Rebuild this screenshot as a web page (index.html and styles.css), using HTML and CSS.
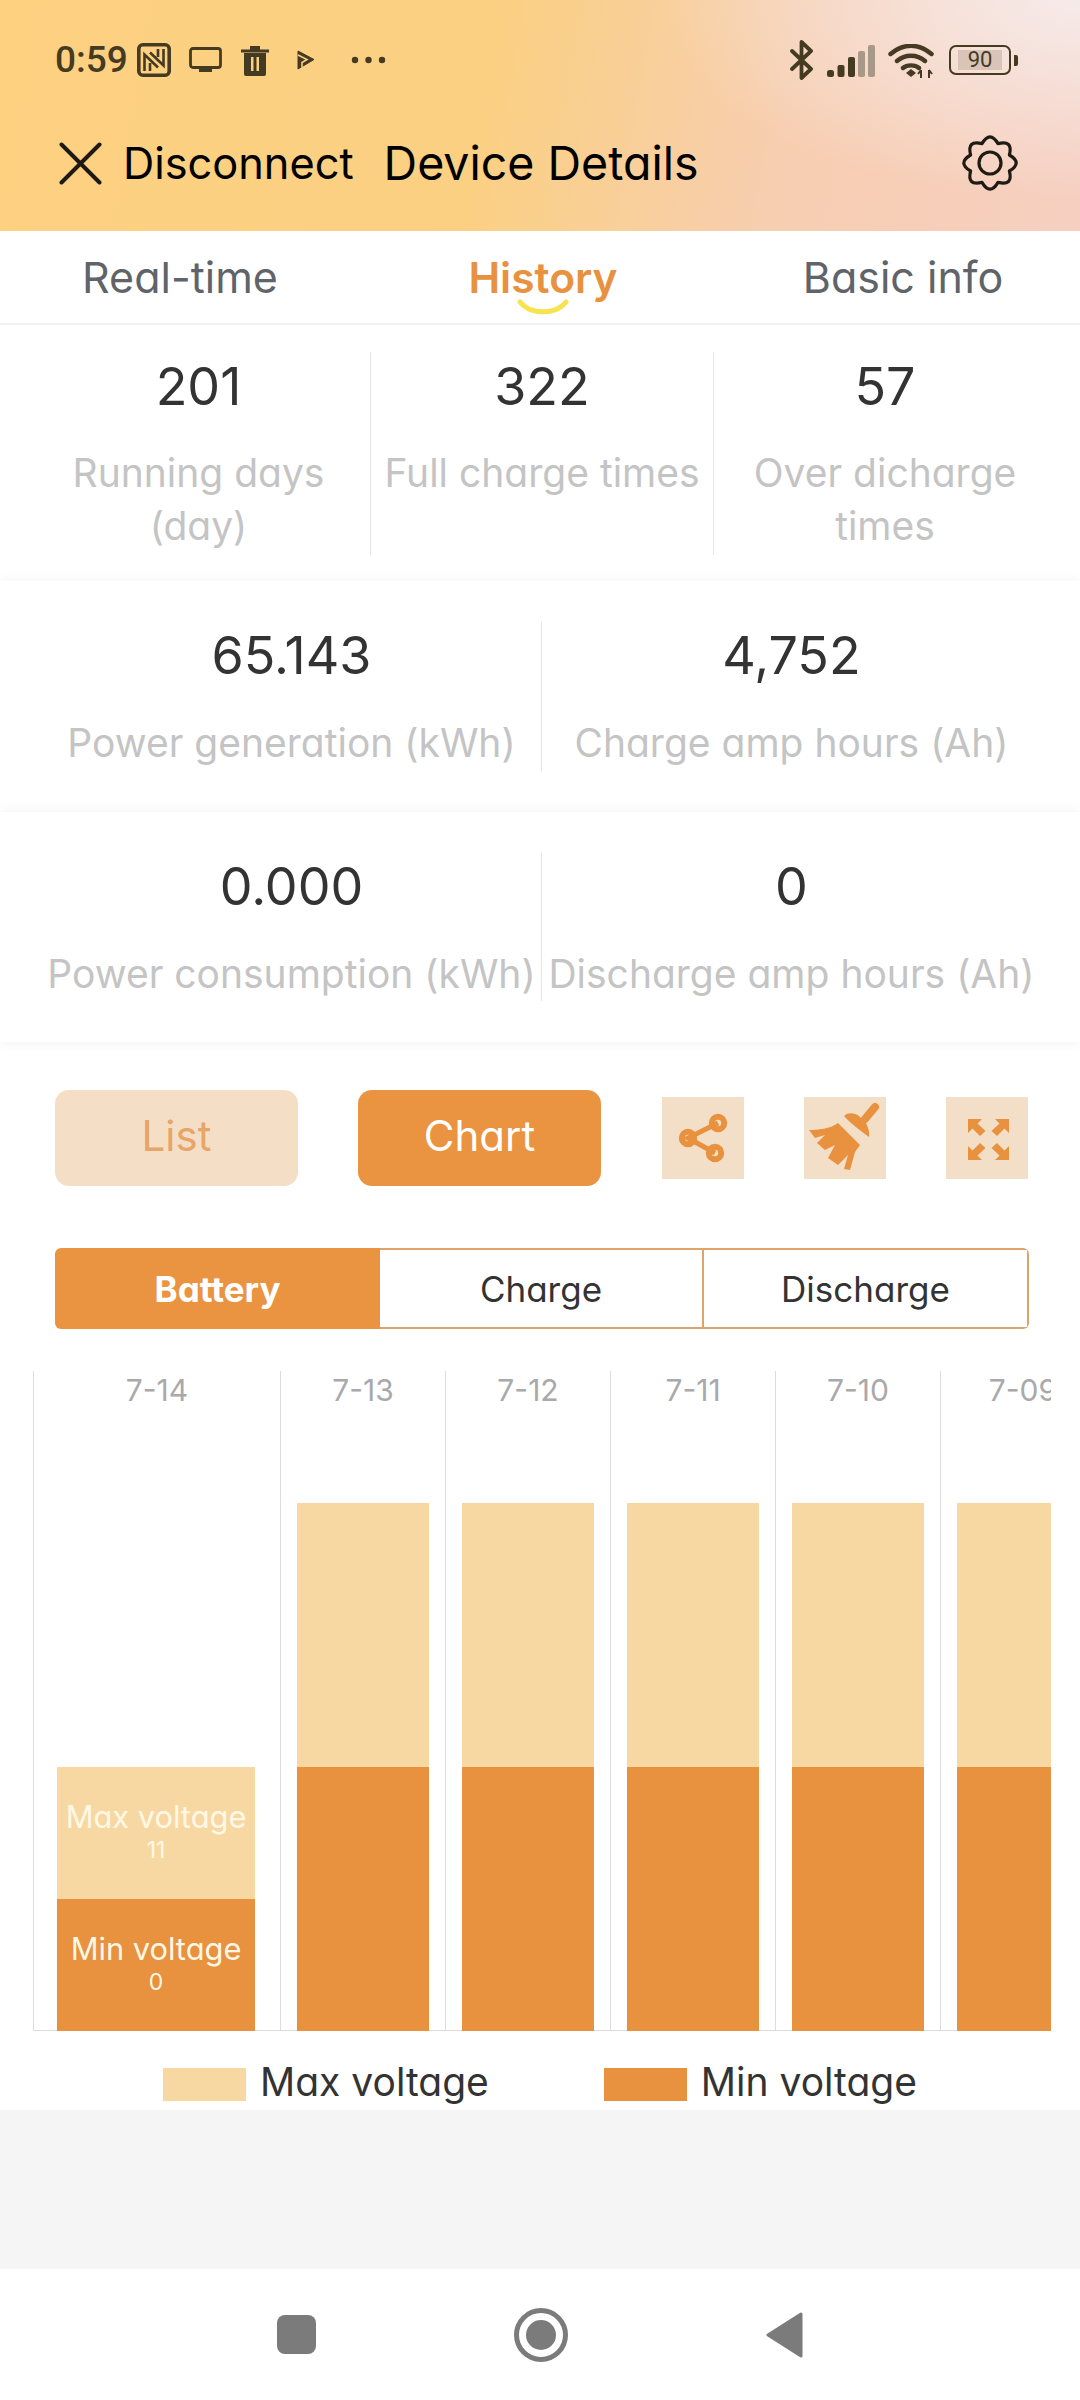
FILE: index.html
```html
<html lang="en">
<head>
    <meta charset="UTF-8">
    <meta name="viewport" content="width=device-width, initial-scale=1.0">
    <title>Device Details</title>
    <link rel="stylesheet" href="styles.css">
</head>
<body>
    <div class="app-header">
        <div class="status-bar">
            <span class="status-time">0:59</span>
            <svg class="icon-nfc" viewBox="0 0 34 34"><rect x="1.800" y="1.800" width="30.400" height="30.400" rx="4" fill="none" stroke="#453a22" stroke-width="3.600"/><path d="M7.500 28V11.500L21 24.500M13 28V20M26.500 6V22.500L13 9.500M21 6V14" fill="none" stroke="#453a22" stroke-width="2.600"/></svg>
            <svg class="icon-screen" viewBox="0 0 33 26"><rect x="1.500" y="1.500" width="30" height="19" rx="2.500" fill="none" stroke="#453a22" stroke-width="2.800"/><rect x="10" y="20" width="13" height="5" fill="#453a22"/></svg>
            <svg class="icon-trash" viewBox="0 0 28 31"><path d="M0 4.500h28v3H0zM9 1h10v4H9z" fill="#453a22"/><path d="M3 8h22v21a2 2 0 0 1-2 2H5a2 2 0 0 1-2-2z" fill="#453a22"/><path d="M10 12h2.500v14H10zM15.500 12H18v14h-2.500z" fill="#fbd083"/></svg>
            <svg class="icon-play" viewBox="0 0 18 20"><path d="M1 1l16 8.500L1 19z" fill="#453a22" stroke="#453a22" stroke-linejoin="round"/><path d="M1 5l9 4.500-5 3v5" fill="none" stroke="#fbd083" stroke-width="1.600"/></svg>
            <svg class="icon-dots" viewBox="0 0 35 8"><circle cx="4" cy="4" r="3.200" fill="#453a22"/><circle cx="17.500" cy="4" r="3.200" fill="#453a22"/><circle cx="31" cy="4" r="3.200" fill="#453a22"/></svg>
            <svg class="icon-bt" viewBox="0 0 25 40"><path d="M3 11l19 18-9.500 9V2L22 11 3 29" fill="none" stroke="#453a22" stroke-width="3.800" stroke-linejoin="round" stroke-linecap="round"/></svg>
            <svg class="icon-signal" viewBox="0 0 48 32"><rect x="0" y="25" width="7" height="7" rx="2.500" fill="#453a22"/><rect x="10.500" y="20" width="7" height="12" rx="2" fill="#453a22"/><rect x="21" y="12" width="7" height="20" rx="2" fill="#453a22"/><rect x="31" y="6" width="7" height="26" rx="2" fill="#a8988a"/><rect x="41" y="0" width="7" height="32" rx="2" fill="#a8988a"/></svg>
            <svg class="icon-wifi" viewBox="0 0 46 34"><path d="M2.500 10c13-11 28-11 41 0M9 17c8-7 20-7 28 0M15 24c4-3.500 12-3.500 16 0" fill="none" stroke="#453a22" stroke-width="4.400" stroke-linecap="round"/><path d="M18 29l5-4 5 4-5 4z" fill="#453a22"/><path d="M33 26v8M30 30l3-4M41 26v8M41 26l3 4" fill="none" stroke="#453a22" stroke-width="2"/></svg>
            <div class="status-battery">
                <div class="battery-body"><span class="battery-level">90</span></div>
                <div class="battery-tip"></div>
            </div>
        </div>
        <div class="title-bar">
            <svg class="icon-close" viewBox="0 0 43 43"><path d="M2.500 2.500l38 38M40.500 2.500l-38 38" fill="none" stroke="#1c1a12" stroke-width="4" stroke-linecap="round"/></svg>
            <span class="disconnect">Disconnect</span>
            <span class="page-title">Device Details</span>
            <svg class="icon-gear" viewBox="-1 -1 56 56"><path d="M46.400 19Q60 27 46.400 35Q50.300 50.300 35 46.400Q27 60 19 46.400Q3.700 50.300 7.600 35Q-6 27 7.600 19Q3.700 3.700 19 7.600Q27 -6 35 7.600Q50.300 3.700 46.400 19z" fill="none" stroke="#1f1a14" stroke-width="3.200" stroke-linejoin="round"/><circle cx="27" cy="27" r="11" fill="none" stroke="#1f1a14" stroke-width="3.200"/></svg>
        </div>
    </div>

    <div class="tabs">
        <div class="tab">Real-time</div>
        <div class="tab active">History
            <svg class="tab-smile" viewBox="0 0 52 16"><path d="M3 3c10 13 36 13 46 0" fill="none" stroke="#f7e24f" stroke-width="5" stroke-linecap="round"/></svg>
        </div>
        <div class="tab">Basic info</div>
    </div>

    <div class="stat-row three">
        <div class="stat-cell"><div class="stat-value">201</div><div class="stat-label">Running days (day)</div></div>
        <div class="stat-cell"><div class="stat-value">322</div><div class="stat-label">Full charge times</div></div>
        <div class="stat-cell"><div class="stat-value">57</div><div class="stat-label">Over dicharge times</div></div>
    </div>
    <div class="stat-row two">
        <div class="stat-cell"><div class="stat-value">65.143</div><div class="stat-label">Power generation (kWh)</div></div>
        <div class="stat-cell"><div class="stat-value">4,752</div><div class="stat-label">Charge amp hours (Ah)</div></div>
    </div>
    <div class="stat-row two last">
        <div class="stat-cell"><div class="stat-value">0.000</div><div class="stat-label">Power consumption (kWh)</div></div>
        <div class="stat-cell"><div class="stat-value">0</div><div class="stat-label">Discharge amp hours (Ah)</div></div>
    </div>

    <div class="toolbar">
        <div class="view-btn">List</div>
        <div class="view-btn active">Chart</div>
        <div class="tool-btn">
            <svg viewBox="0 0 82 82"><path d="M56 26L26 41L53 56" fill="none" stroke="#e8913f" stroke-width="5"/><g fill="none" stroke="#e8913f" stroke-width="6"><circle cx="56" cy="26" r="6.200"/><circle cx="26" cy="41" r="6.200"/><circle cx="53" cy="56" r="6.200"/></g></svg>
        </div>
        <div class="tool-btn">
            <svg viewBox="0 0 82 82"><path d="M71 10L61 22" fill="none" stroke="#e8913f" stroke-width="8" stroke-linecap="round"/><path d="M40 19C44 15 51 16 55 19L62 26C64 31 66 35 65 40C57 34 47 27 40 19z" fill="#e8913f"/><path d="M34 26L56 48L51 55L46 73L40 72L44 58L34 68L24 61L31 48L21 53L13 46L21 38L11 41L5 33C14 33 26 32 34 26z" fill="#e8913f"/></svg>
        </div>
        <div class="tool-btn">
            <svg viewBox="0 0 82 82"><g fill="#e8913f"><path d="M22 22h14l-4.500 4.500 8 7.500-5.500 5-7.500-7.500L22 36z"/><path d="M63 22H49l4.500 4.500-8 7.500 5.500 5 7.500-7.500L63 36z"/><path d="M22 63h14l-4.500-4.500 8-7.500-5.500-5-7.500 7.500L22 49z"/><path d="M63 63H49l4.500-4.500-8-7.500 5.500-5 7.500 7.500L63 49z"/></g></svg>
        </div>
    </div>

    <div class="segments">
        <div class="segment active">Battery</div>
        <div class="segment">Charge</div>
        <div class="segment">Discharge</div>
    </div>

    <div class="chart">
        <div class="chart-col first">
            <div class="chart-date">7-14</div>
            <div class="bar-stack">
                <div class="bar max"><span class="bar-name">Max voltage</span><span class="bar-value">11</span></div>
                <div class="bar min"><span class="bar-name">Min voltage</span><span class="bar-value">0</span></div>
            </div>
        </div>
        <div class="chart-col">
            <div class="chart-date">7-13</div>
            <div class="bar-stack"><div class="bar max"></div><div class="bar min"></div></div>
        </div>
        <div class="chart-col">
            <div class="chart-date">7-12</div>
            <div class="bar-stack"><div class="bar max"></div><div class="bar min"></div></div>
        </div>
        <div class="chart-col">
            <div class="chart-date">7-11</div>
            <div class="bar-stack"><div class="bar max"></div><div class="bar min"></div></div>
        </div>
        <div class="chart-col">
            <div class="chart-date">7-10</div>
            <div class="bar-stack"><div class="bar max"></div><div class="bar min"></div></div>
        </div>
        <div class="chart-col">
            <div class="chart-date">7-09</div>
            <div class="bar-stack"><div class="bar max"></div><div class="bar min"></div></div>
        </div>
    </div>

    <div class="legend">
        <div class="legend-item"><span class="swatch max"></span>Max voltage</div>
        <div class="legend-item"><span class="swatch min"></span>Min voltage</div>
    </div>

    <div class="gray-fill"></div>

    <div class="nav-bar">
        <div class="nav-square"></div>
        <div class="nav-circle"><div class="nav-dot"></div></div>
        <svg class="nav-back" viewBox="0 0 37 46"><path d="M35 2L2 23l33 21z" fill="#7b7b7b" stroke="#7b7b7b" stroke-width="3" stroke-linejoin="round"/></svg>
    </div>
</body>
</html>
```

FILE: styles.css
```css
body {
    margin: 0;
    width: 1080px;
    height: 2400px;
    background: #fff;
    display: flex;
    flex-direction: column;
    overflow: hidden;
    font-family: 'Inter', 'Noto Sans', sans-serif;
    font-feature-settings: "cv11";
    color: #333;
}
svg {
    display: block;
    flex-shrink: 0;
}

/* header */
.app-header {
    height: 231px;
    background:
        radial-gradient(ellipse 420px 200px at 100% 0%, rgba(246, 236, 236, 0.95), rgba(246, 236, 236, 0)),
        linear-gradient(100deg, #fdd180 0%, #fbd083 45%, #f7ceb0 72%, #f6cfc1 100%);
}
.status-bar {
    height: 135px;
    box-sizing: border-box;
    padding: 40px 62px 0 55px;
    display: flex;
    align-items: flex-start;
    color: #453a22;
}
.status-time {
    font-family: 'Roboto', sans-serif;
    font-size: 37px;
    font-weight: 500;
    line-height: 40px;
    width: 82px;
}
.icon-nfc { width: 34px; height: 34px; margin-top: 3px; }
.icon-screen { width: 33px; height: 26px; margin: 7px 0 0 18px; }
.icon-trash { width: 28px; height: 31px; margin: 5px 0 0 19px; }
.icon-play { width: 18px; height: 20px; margin: 10px 0 0 28px; }
.icon-dots { width: 35px; height: 8px; margin: 16px 0 0 36px; }
.icon-bt { width: 25px; height: 40px; margin-left: auto; }
.icon-signal { width: 48px; height: 32px; margin: 5px 0 0 13px; }
.icon-wifi { width: 46px; height: 34px; margin: 4px 0 0 13px; }
.status-battery {
    display: flex;
    align-items: center;
    margin: 5px 0 0 15px;
}
.battery-body {
    width: 62px;
    height: 30px;
    box-sizing: border-box;
    border: 2.5px solid #453a22;
    border-radius: 7px;
    padding: 3px 7px;
    display: flex;
}
.battery-level {
    flex: 1;
    background: #d9c5b8;
    font-family: 'Roboto', sans-serif;
    font-size: 22px;
    line-height: 19px;
    text-align: center;
    color: #453a22;
}
.battery-tip {
    width: 4px;
    height: 11px;
    margin-left: 3px;
    background: #453a22;
    border-radius: 0 2px 2px 0;
}
.title-bar {
    height: 56px;
    padding: 0 62px 0 59px;
    display: flex;
    align-items: center;
    color: #000;
    font-size: 46.5px;
}
.icon-close { width: 43px; height: 43px; margin-right: 21px; }
.disconnect { font-size: 43.3px; margin-right: 30px; }
.icon-gear { width: 56px; height: 56px; margin-left: auto; }

/* tabs */
.tabs {
    height: 92px;
    display: grid;
    grid-template-columns: 360px 366px 354px;
    align-items: center;
    border-bottom: 2px solid #f1f1f1;
    font-size: 43px;
    color: #606468;
    text-align: center;
}
.tab {
    position: relative;
}
.tab.active {
    color: #e8923f;
    font-size: 42.5px;
    font-weight: 600;
}
.tab-smile {
    position: absolute;
    left: 157px;
    top: 47px;
    width: 52px;
    height: 16px;
}

/* stats */
.stat-row {
    display: grid;
    box-shadow: 0 -4px 8px rgba(0, 0, 0, 0.03);
    background: #fff;
}
.stat-row.three {
    height: 256px;
    box-sizing: border-box;
    grid-template-columns: repeat(3, 343px);
    padding: 27px 0 26px 27px;
    box-shadow: none;
}
.stat-row.two {
    height: 231px;
    box-sizing: border-box;
    grid-template-columns: 499px 500px;
    padding: 41px 0 41px 42px;
}
.stat-row.last {
    height: 230px;
    box-shadow: 0 -4px 8px rgba(0, 0, 0, 0.03), 0 4px 8px rgba(0, 0, 0, 0.03);
}
.stat-row.two .stat-label {
    white-space: nowrap;
}
.stat-cell {
    text-align: center;
    border-left: 1px solid #e6e6e6;
    padding: 9px 8px 0;
}
.stat-cell:first-child {
    border-left: none;
}
.stat-row.two .stat-cell {
    padding: 8px 0 0;
}
.stat-value {
    font-size: 52px;
    line-height: 52px;
    color: #333;
}
.stat-label {
    margin-top: 34px;
    font-size: 39px;
    line-height: 53px;
    color: #c4c4c4;
}
.stat-row.three .stat-label {
    margin-top: 33px;
}

/* toolbar */
.toolbar {
    margin-top: 48px;
    height: 96px;
    padding: 0 51px 0 55px;
    display: flex;
    align-items: center;
}
.view-btn {
    width: 243px;
    height: 96px;
    margin-right: 60px;
    padding-bottom: 6px;
    box-sizing: border-box;
    border-radius: 14px;
    background: #f4dfc6;
    color: #e8a569;
    font-size: 42px;
    display: flex;
    align-items: center;
    justify-content: center;
}
.view-btn.active {
    background: #ea9340;
    color: #fff;
    margin-right: 61px;
}
.tool-btn {
    width: 82px;
    height: 82px;
    background: #f3dfc7;
    margin-right: 60px;
}
.tool-btn:last-child {
    margin-right: 0;
}
.segments {
    margin: 62px 51px 0 55px;
    height: 81px;
    border-radius: 6px;
    display: grid;
    grid-template-columns: 325px 324px 1fr;
    overflow: hidden;
    font-size: 35px;
    color: #333;
}
.segment {
    display: flex;
    align-items: center;
    justify-content: center;
    border: 2px solid #dda568;
    border-left: none;
}
.segment.active {
    background: #ea9340;
    color: #fff;
    font-weight: 700;
    border: none;
}

/* chart */
.chart {
    margin: 42px 29px 0 33px;
    height: 660px;
    display: flex;
    overflow: hidden;
}
.chart-col {
    flex: 0 0 165px;
    box-sizing: border-box;
    border-left: 1px solid #dcdcdc;
    border-bottom: 1px solid #dcdcdc;
    display: flex;
    flex-direction: column;
    justify-content: space-between;
}
.chart-col.first {
    flex-basis: 247px;
}
.chart-date {
    padding-top: 1px;
    text-align: center;
    font-size: 30px;
    line-height: 36px;
    color: #a9a9a9;
    white-space: nowrap;
}
.bar-stack {
    margin: 0 0 -1px 16px;
    width: 132px;
}
.chart-col.first .bar-stack {
    margin-left: 23px;
    width: 198px;
}
.bar {
    height: 264px;
    box-sizing: border-box;
    display: flex;
    flex-direction: column;
    align-items: center;
    color: #fff8e6;
    padding-top: 30px;
    white-space: nowrap;
}
.chart-col.first .bar {
    height: 132px;
}
.bar.max, .swatch.max {
    background: #f7d8a2;
}
.bar.min, .swatch.min {
    background: #e8913f;
}
.bar-name {
    font-size: 30.8px;
    line-height: 40px;
}
.bar-value {
    font-size: 23px;
    line-height: 26px;
}

/* legend */
.legend {
    height: 79px;
    padding-top: 34px;
    box-sizing: border-box;
    display: flex;
    justify-content: center;
    gap: 115px;
    font-size: 39px;
    color: #333;
}
.legend-item {
    display: flex;
    align-items: flex-start;
    height: 33px;
    line-height: 33px;
    white-space: nowrap;
}
.swatch {
    width: 83px;
    height: 33px;
    margin: 3px 14px 0 0;
}
.gray-fill {
    height: 159px;
    background: #f5f5f5;
}

/* bottom nav */
.nav-bar {
    flex: 1;
    display: flex;
    align-items: center;
    justify-content: center;
    gap: 198px;
}
.nav-square {
    width: 39px;
    height: 39px;
    border-radius: 8px;
    background: #7b7b7b;
}
.nav-circle {
    width: 54px;
    height: 54px;
    box-sizing: border-box;
    border: 5px solid #7b7b7b;
    border-radius: 50%;
    display: flex;
    align-items: center;
    justify-content: center;
}
.nav-dot {
    width: 30px;
    height: 30px;
    border-radius: 50%;
    background: #7b7b7b;
}
.nav-back {
    width: 37px;
    height: 46px;
}
```
